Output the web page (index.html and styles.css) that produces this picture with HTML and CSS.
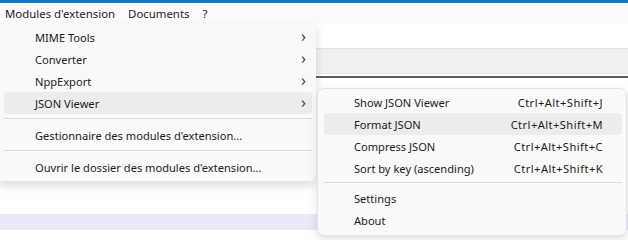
FILE: index.html
```html
<!DOCTYPE html>
<html lang="fr">
<head>
    <meta charset="UTF-8">
    <title>Modules d'extension</title>
    <link rel="stylesheet" href="styles.css">
</head>
<body>
    <div class="app">
        <div class="titlebar"></div>
        <div class="menubar">
            <span class="menubar-item">Modules d'extension</span>
            <span class="menubar-item">Documents</span>
            <span class="menubar-item">?</span>
        </div>
        <div class="toolbar"></div>
        <div class="tabbar"></div>
        <div class="editor">
            <div class="current-line"></div>
        </div>

        <div class="menu main-menu">
            <div class="item"><span class="label">MIME Tools</span><span class="arrow">&#x203A;</span></div>
            <div class="item"><span class="label">Converter</span><span class="arrow">&#x203A;</span></div>
            <div class="item"><span class="label">NppExport</span><span class="arrow">&#x203A;</span></div>
            <div class="item active"><span class="label">JSON Viewer</span><span class="arrow">&#x203A;</span></div>
            <div class="sep"></div>
            <div class="item"><span class="label">Gestionnaire des modules d'extension...</span></div>
            <div class="sep"></div>
            <div class="item"><span class="label">Ouvrir le dossier des modules d'extension...</span></div>
        </div>

        <div class="menu sub-menu">
            <div class="item"><span class="label">Show JSON Viewer</span><span class="key">Ctrl+Alt+Shift+J</span></div>
            <div class="item active"><span class="label">Format JSON</span><span class="key">Ctrl+Alt+Shift+M</span></div>
            <div class="item"><span class="label">Compress JSON</span><span class="key">Ctrl+Alt+Shift+C</span></div>
            <div class="item"><span class="label">Sort by key (ascending)</span><span class="key">Ctrl+Alt+Shift+K</span></div>
            <div class="sep"></div>
            <div class="item"><span class="label">Settings</span></div>
            <div class="item"><span class="label">About</span></div>
        </div>
    </div>
</body>
</html>
```

FILE: styles.css
```css
body {
    margin: 0;
    font-family: "Noto Sans", "Open Sans", sans-serif;
    font-size: 11.1px;
    color: #1b1b1b;
    background-color: white;
}
.app {
    position: relative;
    width: 628px;
    height: 240px;
    overflow: hidden;
}
.titlebar {
    height: 3px;
    background-color: #0b78d3;
}
.menubar {
    height: 20px;
    display: flex;
    align-items: center;
    padding-left: 5px;
    gap: 13px;
    font-size: 11.4px;
    background-color: #fbfbfb;
}
.toolbar {
    height: 25px;
    background-color: white;
}
.tabbar {
    height: 24px;
    background-color: #f0f0f0;
    border-top: 1px solid #e2e2e2;
    border-bottom: 1px solid #e6e6e6;
}
.editor {
    border-top: 2px solid #5c5c5c;
    margin-top: 2px;
    padding-top: 136px;
}
.current-line {
    height: 16px;
    background-color: #e8e8fb;
}
.menu {
    position: absolute;
    background-color: #f9f9f9;
    box-sizing: border-box;
}
.main-menu {
    left: -2px;
    top: 23px;
    width: 318px;
    padding: 3px 4px 3px 6px;
    box-shadow: 0 5px 10px rgba(0,0,0,0.14);
    border-radius: 0 0 6px 0;
}
.main-menu .sep {
    margin: 4px 0 5px 0;
}
.sub-menu {
    left: 317px;
    top: 88px;
    width: 310px;
    padding: 2px 4px 4px 6px;
    border: 1px solid #e3e3e3;
    border-radius: 7px;
    box-shadow: 0 4px 10px rgba(0,0,0,0.12);
}
.item {
    height: 22px;
    display: flex;
    align-items: center;
    padding-left: 31px;
    padding-right: 6px;
    border-radius: 4px;
}
.sub-menu .item {
    padding-left: 30px;
    padding-right: 19px;
}
.item.active {
    background-color: #ececec;
}
.label {
    flex: 1;
    white-space: nowrap;
}
.arrow {
    font-size: 16px;
    line-height: 1;
    color: #444;
    margin-top: -2px;
}
.key {
    white-space: nowrap;
    letter-spacing: 0.45px;
}
.sep {
    height: 1px;
    margin: 3px 0 4px 0;
    background-color: #dadada;
}
```
